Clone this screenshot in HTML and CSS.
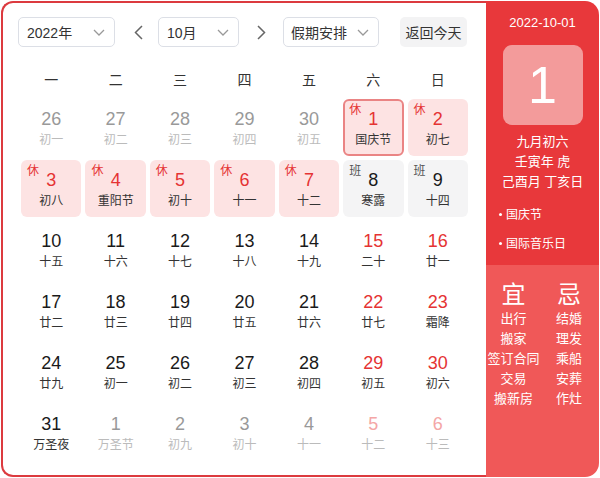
FILE: index.html
```html
<!DOCTYPE html>
<html lang="zh">
<head>
<meta charset="utf-8">
<link rel="stylesheet" href="styles.css">
</head>
<body>
<div class="app">
  <div class="main">
    <div class="controls">
      <div class="select sel-year"><span>2022年</span><svg class="chev" width="12" height="7" viewBox="0 0 12 7"><polyline points="1,1 6,6 11,1" fill="none" stroke="#999" stroke-width="1.3"/></svg></div>
      <div class="arrow arrow-prev"><svg width="9" height="15" viewBox="0 0 9 15"><polyline points="8,1 1.5,7.5 8,14" fill="none" stroke="#666" stroke-width="1.5"/></svg></div>
      <div class="select sel-month"><span>10月</span><svg class="chev" width="12" height="7" viewBox="0 0 12 7"><polyline points="1,1 6,6 11,1" fill="none" stroke="#999" stroke-width="1.3"/></svg></div>
      <div class="arrow arrow-next"><svg width="9" height="15" viewBox="0 0 9 15"><polyline points="1,1 7.5,7.5 1,14" fill="none" stroke="#666" stroke-width="1.5"/></svg></div>
      <div class="select sel-hol"><span>假期安排</span><svg class="chev" width="12" height="7" viewBox="0 0 12 7"><polyline points="1,1 6,6 11,1" fill="none" stroke="#999" stroke-width="1.3"/></svg></div>
      <div class="today-btn">返回今天</div>
    </div>
    <div class="weekdays">
      <div>一</div><div>二</div><div>三</div><div>四</div><div>五</div><div>六</div><div>日</div>
    </div>
    <div class="grid">
      <div class="cell other"><div class="num">26</div><div class="lunar">初一</div></div>
      <div class="cell other"><div class="num">27</div><div class="lunar">初二</div></div>
      <div class="cell other"><div class="num">28</div><div class="lunar">初三</div></div>
      <div class="cell other"><div class="num">29</div><div class="lunar">初四</div></div>
      <div class="cell other"><div class="num">30</div><div class="lunar">初五</div></div>
      <div class="cell rest selected"><span class="tag">休</span><div class="num">1</div><div class="lunar">国庆节</div></div>
      <div class="cell rest"><span class="tag">休</span><div class="num">2</div><div class="lunar">初七</div></div>

      <div class="cell rest"><span class="tag">休</span><div class="num">3</div><div class="lunar">初八</div></div>
      <div class="cell rest"><span class="tag">休</span><div class="num">4</div><div class="lunar">重阳节</div></div>
      <div class="cell rest"><span class="tag">休</span><div class="num">5</div><div class="lunar">初十</div></div>
      <div class="cell rest"><span class="tag">休</span><div class="num">6</div><div class="lunar">十一</div></div>
      <div class="cell rest"><span class="tag">休</span><div class="num">7</div><div class="lunar">十二</div></div>
      <div class="cell work"><span class="tag">班</span><div class="num">8</div><div class="lunar">寒露</div></div>
      <div class="cell work"><span class="tag">班</span><div class="num">9</div><div class="lunar">十四</div></div>

      <div class="cell"><div class="num">10</div><div class="lunar">十五</div></div>
      <div class="cell"><div class="num">11</div><div class="lunar">十六</div></div>
      <div class="cell"><div class="num">12</div><div class="lunar">十七</div></div>
      <div class="cell"><div class="num">13</div><div class="lunar">十八</div></div>
      <div class="cell"><div class="num">14</div><div class="lunar">十九</div></div>
      <div class="cell weekend"><div class="num">15</div><div class="lunar">二十</div></div>
      <div class="cell weekend"><div class="num">16</div><div class="lunar">廿一</div></div>

      <div class="cell"><div class="num">17</div><div class="lunar">廿二</div></div>
      <div class="cell"><div class="num">18</div><div class="lunar">廿三</div></div>
      <div class="cell"><div class="num">19</div><div class="lunar">廿四</div></div>
      <div class="cell"><div class="num">20</div><div class="lunar">廿五</div></div>
      <div class="cell"><div class="num">21</div><div class="lunar">廿六</div></div>
      <div class="cell weekend"><div class="num">22</div><div class="lunar">廿七</div></div>
      <div class="cell weekend"><div class="num">23</div><div class="lunar">霜降</div></div>

      <div class="cell"><div class="num">24</div><div class="lunar">廿九</div></div>
      <div class="cell"><div class="num">25</div><div class="lunar">初一</div></div>
      <div class="cell"><div class="num">26</div><div class="lunar">初二</div></div>
      <div class="cell"><div class="num">27</div><div class="lunar">初三</div></div>
      <div class="cell"><div class="num">28</div><div class="lunar">初四</div></div>
      <div class="cell weekend"><div class="num">29</div><div class="lunar">初五</div></div>
      <div class="cell weekend"><div class="num">30</div><div class="lunar">初六</div></div>

      <div class="cell"><div class="num">31</div><div class="lunar">万圣夜</div></div>
      <div class="cell other"><div class="num">1</div><div class="lunar">万圣节</div></div>
      <div class="cell other"><div class="num">2</div><div class="lunar">初九</div></div>
      <div class="cell other"><div class="num">3</div><div class="lunar">初十</div></div>
      <div class="cell other"><div class="num">4</div><div class="lunar">十一</div></div>
      <div class="cell other other-weekend"><div class="num">5</div><div class="lunar">十二</div></div>
      <div class="cell other other-weekend"><div class="num">6</div><div class="lunar">十三</div></div>
    </div>
  </div>
  <div class="side">
    <div class="side-top">
      <div class="side-date">2022-10-01</div>
      <div class="big-day">1</div>
      <div class="lunar-info">
        <div>九月初六</div>
        <div>壬寅年 虎</div>
        <div>己酉月 丁亥日</div>
      </div>
      <ul class="fests">
        <li>国庆节</li>
        <li>国际音乐日</li>
      </ul>
    </div>
    <div class="side-bottom">
      <div class="yiji">
        <div class="yj-col">
          <div class="yj-title">宜</div>
          <div>出行</div><div>搬家</div><div>签订合同</div><div>交易</div><div>搬新房</div>
        </div>
        <div class="yj-col">
          <div class="yj-title">忌</div>
          <div>结婚</div><div>理发</div><div>乘船</div><div>安葬</div><div>作灶</div>
        </div>
      </div>
    </div>
  </div>
</div>
</body>
</html>
```
FILE: styles.css
```css
html, body {
  margin: 0;
  padding: 0;
  background: #fff;
}
body {
  font-family: "Liberation Sans", "Noto Sans CJK SC", sans-serif;
  color: #333;
}
.app {
  margin: 1px 0 0 1px;
  width: 598px;
  height: 476px;
  display: flex;
}
.main {
  box-sizing: border-box;
  width: 485px;
  height: 476px;
  border: 2px solid #dc3a3f;
  border-right: none;
  border-radius: 12px 0 0 12px;
  padding: 14px 0 0 15px;
  background: #fff;
}
.controls {
  display: flex;
  align-items: center;
  height: 30px;
}
.select {
  box-sizing: border-box;
  height: 30px;
  border: 1px solid #dcdfe6;
  border-radius: 5px;
  display: flex;
  align-items: center;
  justify-content: space-between;
  padding: 0 9px 0 8px;
  font-size: 14px;
  color: #333;
}
.sel-year { width: 97px; }
.sel-month { width: 81px; }
.sel-hol { width: 96px; padding-left: 7px; }
.arrow {
  display: flex;
  align-items: center;
  justify-content: center;
  height: 30px;
}
.arrow-prev { width: 43px; padding-left: 4px; box-sizing: border-box; }
.arrow-next { width: 44px; padding-left: 0; box-sizing: border-box; }
.today-btn {
  margin-left: 21px;
  width: 67px;
  height: 30px;
  border-radius: 5px;
  background: #f3f3f4;
  font-size: 14px;
  color: #333;
  display: flex;
  align-items: center;
  justify-content: center;
}
.weekdays {
  margin: 15px 0 0 3px;
  width: 447px;
  height: 34px;
  display: grid;
  grid-template-columns: repeat(7, 1fr);
  column-gap: 4px;
  align-items: center;
  font-size: 14px;
  color: #333;
  text-align: center;
}
.grid {
  margin: 3px 0 0 3px;
  width: 447px;
  display: grid;
  grid-template-columns: repeat(7, 1fr);
  grid-auto-rows: 57px;
  gap: 4px;
}
.cell {
  position: relative;
  box-sizing: border-box;
  border-radius: 6px;
  padding-top: 8px;
  text-align: center;
}
.num {
  font-size: 18px;
  line-height: 24px;
  color: #1a1a1a;
}
.lunar {
  font-size: 12px;
  line-height: 18px;
  color: #333;
}
.tag {
  position: absolute;
  left: 6px;
  top: 3px;
  font-size: 12px;
  line-height: 16px;
}
.rest { background: #fde3e3; }
.rest .num, .rest .tag { color: #e53333; }
.selected { border: 2px solid #ea8484; padding-top: 6px; }
.selected .tag { left: 4px; top: 1px; }
.work { background: #f4f4f5; }
.work .tag { color: #555; }
.weekend .num { color: #e53333; }
.other .num { color: #999; }
.other .lunar { color: #bbb; }
.other-weekend .num { color: #f4a6a6; }

.side {
  width: 113px;
  height: 476px;
  display: flex;
  flex-direction: column;
  border-radius: 0 14px 14px 0;
  overflow: hidden;
  color: #fff;
}
.side-top {
  height: 264px;
  background: #e8383b;
  display: flex;
  flex-direction: column;
  align-items: center;
  box-sizing: border-box;
  padding-top: 13px;
}
.side-date {
  font-size: 13px;
  line-height: 18px;
}
.big-day {
  margin-top: 13px;
  width: 80px;
  height: 80px;
  border-radius: 9px;
  background: #f39b9b;
  font-size: 52px;
  line-height: 80px;
  text-align: center;
  color: #fff;
}
.lunar-info {
  margin-top: 7px;
  font-size: 13px;
  line-height: 20px;
  text-align: center;
}
.fests {
  list-style: none;
  margin: 14px 0 0 0;
  padding: 0 0 0 13px;
  align-self: stretch;
  font-size: 12px;
}
.fests li {
  line-height: 18px;
  margin-bottom: 11px;
}
.fests li::before {
  content: "";
  display: inline-block;
  width: 3px;
  height: 3px;
  border-radius: 50%;
  background: #fff;
  margin-right: 4px;
  vertical-align: middle;
  position: relative;
  top: -1px;
}
.side-bottom {
  flex: 1;
  background: #f05858;
  padding-top: 16px;
}
.yiji {
  display: grid;
  grid-template-columns: 55px 56px;
}
.yj-col {
  text-align: center;
  font-size: 13px;
  line-height: 20px;
}
.yj-title {
  font-size: 24px;
  line-height: 28px;
}
```
